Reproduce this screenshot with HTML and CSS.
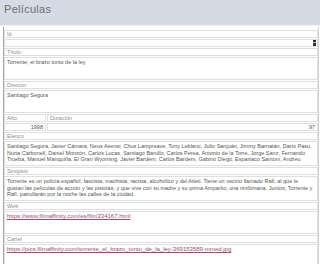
FILE: index.html
```html
<!DOCTYPE html>
<html lang="es">
  <head>
    <meta charset="UTF-8" />
    <meta name="viewport" content="width=device-width, initial-scale=1.0" />
    <title>Películas</title>
    <link rel="stylesheet" href="styles.css">
  </head>
  <body>
    <header class="top">
      <h1>Películas</h1>
    </header>

    <div class="form">
      <div class="field">
        <div class="label">Id</div>
        <div class="value value-short">
          <span class="spinner"></span>
        </div>
      </div>

      <div class="field">
        <div class="label">Título</div>
        <div class="value value-tall">Torrente, el brazo tonto de la ley</div>
      </div>

      <div class="field">
        <div class="label">Director</div>
        <div class="value value-tall">Santiago Segura</div>
      </div>

      <div class="pair">
        <div class="field field-year">
          <div class="label">Año</div>
          <div class="value value-short number">1998</div>
        </div>
        <div class="field field-length">
          <div class="label">Duración</div>
          <div class="value value-short number">97</div>
        </div>
      </div>

      <div class="field">
        <div class="label">Elenco</div>
        <div class="value value-text">
          Santiago Segura, Javier Cámara, Neus Asensi, Chus Lampreave, Tony Leblanc, Julio Sanjuán, Jimmy Barnatán, Darío Paso,
          Nuria Carbonell, Daniel Monzón, Carlos Lucas, Santiago Barullo, Carlos Perea, Antonio de la Torre, Jorge Sanz, Fernando
          Trueba, Manuel Manquiña, El Gran Wyoming, Javier Bardem, Carlos Bardem, Gabino Diego, Espartaco Santoni, Andreu
        </div>
      </div>

      <div class="field">
        <div class="label">Sinopsis</div>
        <div class="value value-text">
          Torrente es un policía español, fascista, machista, racista, alcohólico y del Atleti. Tiene un vecino llamado Rafi, al que le
          gustan las películas de acción y las pistolas, y que vive con su madre y su prima Amparito, una ninfómana. Juntos,
          Torrente y Rafi, patrullarán por la noche las calles de la ciudad.
        </div>
      </div>

      <div class="field">
        <div class="label">Web</div>
        <div class="value value-tall">
          <a href="#">https://www.filmaffinity.com/es/film334167.html</a>
        </div>
      </div>

      <div class="field">
        <div class="label">Cartel</div>
        <div class="value value-tall">
          <a href="#">https://pics.filmaffinity.com/torrente_el_brazo_tonto_de_la_ley-369153589-mmed.jpg</a>
        </div>
      </div>
    </div>
  </body>
</html>
```

FILE: styles.css
```css
html {
  font-family: "Liberation Sans", Arial, sans-serif;
}

body {
  margin: 0;
  padding: 0;
  width: 320px;
  height: 264px;
  overflow: hidden;
  background: #fff;
}

.top {
  height: 26px;
  background-color: #d5dbe5;
  border-bottom: 1px solid #eef1f5;
  box-sizing: border-box;
}

h1 {
  margin: 0;
  padding: 2px 4px;
  font-size: 11px;
  font-weight: normal;
  line-height: 14px;
  color: #707070;
  letter-spacing: 0.3px;
}

.form {
  margin: 1px 1px 0 3px;
  padding-top: 3px;
  border-left: 1px solid #a9a9a9;
  border-right: 1px solid #d2d2d2;
  display: flex;
  flex-direction: column;
  gap: 1px;
  font-size: 5.5px;
}

.field {
  display: flex;
  flex-direction: column;
  gap: 1px;
}

.label,
.value {
  border: 1px solid #dedede;
  padding: 0 2px;
  box-sizing: border-box;
}

.label {
  height: 8px;
  line-height: 6px;
  color: #8c8c8c;
}

.value {
  color: #555;
  line-height: 6.5px;
}

.value-short {
  height: 8px;
  line-height: 6px;
  display: flex;
  align-items: center;
}

.value-tall {
  height: 23px;
  padding-top: 1px;
}

.value-text {
  height: 25px;
  padding-top: 1px;
  overflow: hidden;
}

.number {
  justify-content: flex-end;
}

.pair {
  display: flex;
  gap: 1px;
}

.field-year {
  width: 42px;
}

.field-length {
  flex: 1;
}

.spinner {
  margin-left: auto;
  margin-right: -1px;
  width: 3px;
  height: 6px;
  background: linear-gradient(#333 0 2px, #bbb 2px 3px, #333 3px 6px);
}

a {
  color: #a3486e;
  font-size: 6px;
}
```
